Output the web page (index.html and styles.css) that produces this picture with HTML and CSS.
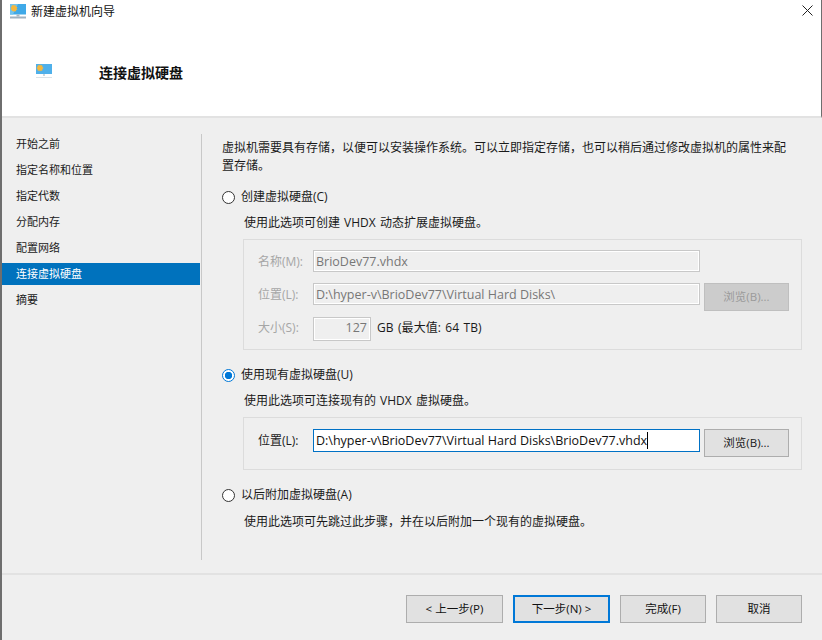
FILE: index.html
```html
<!DOCTYPE html>
<html lang="zh-CN">
<head>
<meta charset="utf-8">
<title>新建虚拟机向导</title>
<link rel="stylesheet" href="styles.css">
</head>
<body>
<div class="window">
  <header class="header">
    <div class="titlebar">
      <svg class="title-icon" width="16" height="15" viewBox="0 0 16 15">
        <rect x="0" y="0" width="16" height="10.5" fill="#3fa9e8"/>
        <path d="M0 0h8L3 10.5H0z" fill="#6fc3f0"/>
        <path d="M4 .5l.8 1.3 1.4-.6-.1 1.6 1.5.5-1 1.1 1 1.1-1.5.5.1 1.6-1.4-.6L4 8l-.8-1.3-1.4.6.1-1.6-1.5-.5 1-1.1-1-1.1 1.5-.5-.1-1.6 1.4.6z" fill="#f6b73c"/>
        <rect x="6.5" y="10.5" width="3" height="2" fill="#a9b7c2"/>
        <rect x="0" y="12.5" width="16" height="2" fill="#9fb2c1"/>
      </svg>
      <span class="title-text">新建虚拟机向导</span>
      <svg class="close" width="11" height="11" viewBox="0 0 11 11"><path d="M.5.5l10 10M10.5.5l-10 10" stroke="#222" stroke-width="1" fill="none"/></svg>
    </div>
    <div class="banner">
      <svg class="banner-icon" width="16" height="14" viewBox="0 0 16 14">
        <rect x="0" y="0" width="16" height="10" fill="#4fb0ea"/>
        <path d="M4 .2l.8 1.2 1.4-.5-.1 1.5 1.4.5-1 1 1 1-1.4.5.1 1.5-1.4-.5L4 7.6l-.8-1.2-1.4.5.1-1.5-1.4-.5 1-1-1-1 1.4-.5-.1-1.5 1.4.5z" fill="#f6b73c"/>
        <rect x="7" y="10" width="2" height="2" fill="#ccd6dd"/>
        <rect x="0" y="13" width="16" height="1" fill="#dbe3e8"/>
      </svg>
      <h1 class="banner-title">连接虚拟硬盘</h1>
    </div>
  </header>
  <main class="main">
    <nav class="steps">
      <div class="step">开始之前</div>
      <div class="step">指定名称和位置</div>
      <div class="step">指定代数</div>
      <div class="step">分配内存</div>
      <div class="step">配置网络</div>
      <div class="step step-active">连接虚拟硬盘</div>
      <div class="step">摘要</div>
    </nav>
    <section class="content">
      <p class="intro">虚拟机需要具有存储，以便可以安装操作系统。可以立即指定存储，也可以稍后通过修改虚拟机的属性来配置存储。</p>

      <div class="option option-first"><span class="radio"></span><span>创建虚拟硬盘(C)</span></div>
      <p class="desc">使用此选项可创建 VHDX 动态扩展虚拟硬盘。</p>
      <div class="box box-disabled">
        <div class="field">
          <span class="field-label">名称(M):</span>
          <div class="input input-off">BrioDev77.vhdx</div>
        </div>
        <div class="field field-loc">
          <span class="field-label">位置(L):</span>
          <div class="input input-off">D:\hyper-v\BrioDev77\Virtual Hard Disks\</div>
          <div class="browse browse-off">浏览(B)...</div>
        </div>
        <div class="field field-size">
          <span class="field-label">大小(S):</span>
          <div class="input input-off input-size">127</div>
          <span class="size-note">GB (最大值: 64 TB)</span>
        </div>
      </div>

      <div class="option option-second"><span class="radio radio-on"></span><span>使用现有虚拟硬盘(U)</span></div>
      <p class="desc">使用此选项可连接现有的 VHDX 虚拟硬盘。</p>
      <div class="box box-active">
        <div class="field field-active">
          <span class="field-label label-on">位置(L):</span>
          <div class="input input-focus"><span>D:\hyper-v\BrioDev77\Virtual Hard Disks\BrioDev77.vhdx</span><i class="caret"></i></div>
          <div class="browse">浏览(B)...</div>
        </div>
      </div>

      <div class="option option-third"><span class="radio"></span><span>以后附加虚拟硬盘(A)</span></div>
      <p class="desc desc-third">使用此选项可先跳过此步骤，并在以后附加一个现有的虚拟硬盘。</p>
    </section>
  </main>
  <footer class="footer">
    <div class="btn btn-prev">&lt; 上一步(P)</div>
    <div class="btn btn-next">下一步(N) &gt;</div>
    <div class="btn btn-finish">完成(F)</div>
    <div class="btn btn-cancel">取消</div>
  </footer>
</div>
</body>
</html>
```

FILE: styles.css
```css
* { box-sizing: border-box; }
html, body { margin: 0; padding: 0; }
body {
  width: 822px;
  height: 640px;
  overflow: hidden;
  font-family: "Open Sans", "Noto Sans CJK SC", sans-serif;
  font-size: 12px;
  line-height: 18px;
  color: #1a1a1a;
}
p, h1 { margin: 0; }
.window {
  width: 822px;
  height: 640px;
  display: flex;
  flex-direction: column;
  background: #efefef;
  border-left: 2px solid #6e6e6e;
}
.header {
  height: 118px;
  background: #fff;
  border-bottom: 2px solid #e2e2e2;
  border-right: 1px solid #6e6e6e;
  flex: none;
}
.titlebar {
  height: 23px;
  display: flex;
  align-items: center;
  padding-left: 8px;
  padding-right: 8px;
}
.title-icon { flex: none; margin-top: -1px; }
.title-text { margin-left: 5px; color: #111; }
.close { margin-left: auto; margin-top: -3px; }
.banner {
  display: flex;
  align-items: center;
  padding-left: 34px;
  margin-top: 40px;
  height: 20px;
}
.banner-icon { flex: none; margin-top: -4px; }
.banner-title { margin-left: 47px; font-size: 14px; font-weight: 700; color: #111; }
.main {
  flex: none;
  height: 457px;
  display: flex;
  border-bottom: 2px solid #e2e2e2;
}
.steps {
  width: 199px;
  flex: none;
  padding-top: 15px;
  display: flex;
  flex-direction: column;
}
.step {
  height: 22px;
  margin-bottom: 4px;
  width: 198px;
  padding-left: 14px;
  font-size: 11px;
  line-height: 22px;
  color: #1a1a1a;
}
.step-active { background: #0072bd; color: #fff; }
.content {
  flex: none;
  width: 620px;
  height: 426px;
  margin-top: 16px;
  padding-left: 20px;
  border-left: 1px solid #c8c8c8;
}
.intro { width: 572px; margin-top: 5px; }
.option { display: flex; align-items: center; height: 18px; }
.option-first { margin-top: 13px; }
.option-second { margin-top: 16px; }
.option-third { margin-top: 16px; }
.radio {
  width: 13px;
  height: 13px;
  border: 1px solid #333;
  border-radius: 50%;
  background: #fff;
  margin-right: 6px;
  flex: none;
}
.radio-on {
  border-color: #0078d7;
  background: radial-gradient(circle, #0078d7 0 3.4px, #fff 4px);
}
.desc { margin-left: 22px; margin-top: 8px; word-spacing: 1px; }
.desc-third { margin-top: 9px; }
.box {
  margin-left: 21px;
  width: 559px;
  border: 1px solid #dcdcdc;
  margin-top: 7px;
}
.box-disabled { height: 111px; padding: 10px 12px 0 12px; }
.box-active { height: 53px; padding: 11px 12px 0 12px; }
.field { display: flex; align-items: flex-start; }
.field-loc { margin-top: 9px; }
.field-size { margin-top: 6px; }
.field-label { width: 57px; flex: none; color: #a6a6a6; line-height: 24px; padding-left: 2px; }
.field-size .field-label { line-height: 22px; }
.label-on { color: #1a1a1a; }
.input {
  width: 387px;
  height: 22px;
  padding-left: 2px;
  font-size: 12.5px;
  line-height: 21px;
  flex: none;
  white-space: nowrap;
  overflow: hidden;
}
.input-off {
  border: 1px solid #c8c8c8;
  outline: 1px solid #fff;
  outline-offset: -2px;
  color: #777;
  background: #efefef;
}
.input-size { width: 58px; height: 24px; padding: 0 3px 0 0; text-align: right; line-height: 20px; }
.size-note { margin-left: 6px; line-height: 22px; word-spacing: 1px; letter-spacing: .1px; }
.input-focus {
  border: 1px solid #0071c5;
  background: #fff;
  height: 23px;
  display: flex;
  align-items: center;
  color: #111;
}
.caret { width: 1px; height: 17px; background: #000; flex: none; }
.browse {
  width: 85px;
  height: 28px;
  margin-left: 4px;
  flex: none;
  border: 1px solid #adadad;
  background: #e1e1e1;
  text-align: center;
  font-size: 11.5px;
  line-height: 26px;
  color: #1a1a1a;
}
.browse-off { background: #cccccc; border-color: #bfbfbf; color: #9a9a9a; }
.footer {
  flex: 1;
  display: flex;
  padding-top: 20px;
  padding-left: 404px;
}
.btn {
  height: 28px;
  border: 1px solid #adadad;
  background: #e1e1e1;
  text-align: center;
  font-size: 11.5px;
  line-height: 26px;
  color: #111;
  flex: none;
}
.btn-prev { width: 97px; }
.btn-next { width: 97px; margin-left: 10px; border: 2px solid #0078d7; line-height: 24px; }
.btn-finish { width: 86px; margin-left: 10px; }
.btn-cancel { width: 86px; margin-left: 10px; }
```
